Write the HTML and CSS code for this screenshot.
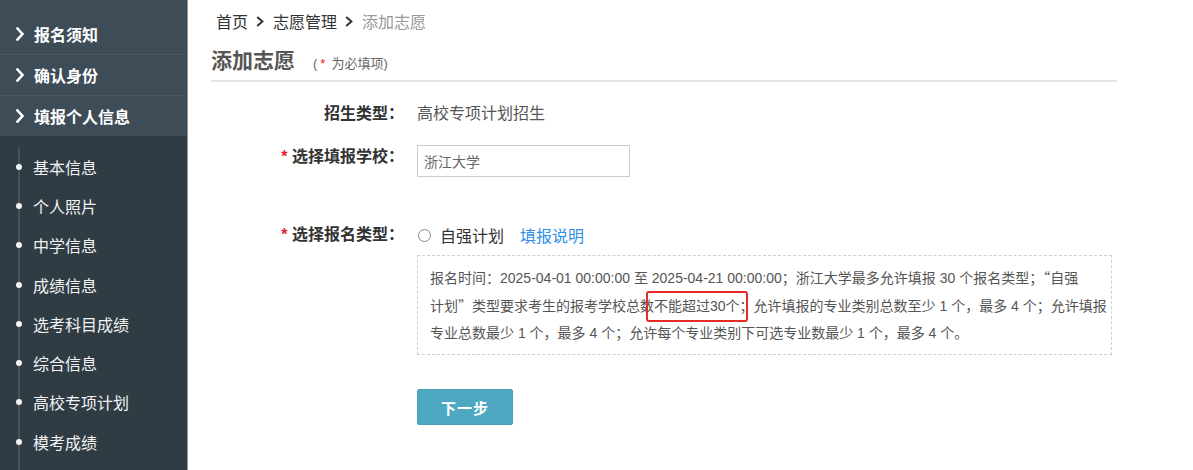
FILE: index.html
```html
<!DOCTYPE html>
<html lang="zh-CN">
<head>
<meta charset="utf-8">
<title>添加志愿</title>
<link rel="stylesheet" href="styles.css">
</head>
<body>
<div class="layout">
  <aside class="sidebar">
    <ul class="menu">
      <li class="menu-item"><svg class="chev" width="8" height="14" viewBox="0 0 8 14"><path d="M1.5 1.5 L6.5 7 L1.5 12.5" fill="none" stroke="#fff" stroke-width="2.6" stroke-linecap="square"/></svg>报名须知</li>
      <li class="menu-item"><svg class="chev" width="8" height="14" viewBox="0 0 8 14"><path d="M1.5 1.5 L6.5 7 L1.5 12.5" fill="none" stroke="#fff" stroke-width="2.6" stroke-linecap="square"/></svg>确认身份</li>
      <li class="menu-item"><svg class="chev" width="8" height="14" viewBox="0 0 8 14"><path d="M1.5 1.5 L6.5 7 L1.5 12.5" fill="none" stroke="#fff" stroke-width="2.6" stroke-linecap="square"/></svg>填报个人信息</li>
    </ul>
    <div class="submenu-wrap">
      <ul class="submenu">
        <li>基本信息</li>
        <li>个人照片</li>
        <li>中学信息</li>
        <li>成绩信息</li>
        <li>选考科目成绩</li>
        <li>综合信息</li>
        <li>高校专项计划</li>
        <li>模考成绩</li>
      </ul>
    </div>
  </aside>
  <main class="main">
    <nav class="breadcrumb">
      <span>首页</span>
      <svg class="bc-sep" width="8" height="11" viewBox="0 0 8 11"><path d="M1.2 1 L6.4 5.5 L1.2 10" fill="none" stroke="#333" stroke-width="2"/></svg>
      <span>志愿管理</span>
      <svg class="bc-sep" width="8" height="11" viewBox="0 0 8 11"><path d="M1.2 1 L6.4 5.5 L1.2 10" fill="none" stroke="#333" stroke-width="2"/></svg>
      <span class="bc-current">添加志愿</span>
    </nav>
    <div class="page-title">
      <h2 class="title">添加志愿</h2>
      <span class="hint">(<span class="req hint-star">*</span>为必填项)</span>
    </div>
    <form class="form">
      <div class="row row-first">
        <div class="label">招生类型：</div>
        <div class="value text-value">高校专项计划招生</div>
      </div>
      <div class="row row-school">
        <div class="label"><span class="req">*</span> 选择填报学校：</div>
        <div class="value"><input class="input" type="text" value="浙江大学"></div>
      </div>
      <div class="row row-type">
        <div class="label"><span class="req">*</span> 选择报名类型：</div>
        <div class="value">
          <div class="radio-line">
            <span class="radio"></span>
            <span class="radio-text">自强计划</span>
            <a class="link">填报说明</a>
          </div>
          <div class="notice">报名时间：2025-04-01 00:00:00 至 2025-04-21 00:00:00；浙江大学最多允许填报 30 个报名类型；<span class="q">“</span>自强<br>计划<span class="q">”</span>类型要求考生的报考学校总数<span class="mark">不能超过30个；</span>允许填报的专业类别总数至少 1 个，最多 4 个；允许填报<br>专业总数最少 1 个，最多 4 个；允许每个专业类别下可选专业数最少 1 个，最多 4 个。</div>
          <button class="btn" type="button">下一步</button>
        </div>
      </div>
    </form>
  </main>
</div>
</body>
</html>
```
FILE: styles.css
```css
* { box-sizing: border-box; }
html, body { margin: 0; padding: 0; }
body {
  font-family: "Liberation Sans", "Noto Sans CJK SC", sans-serif;
  background: #fff;
  color: #333;
  width: 1193px;
  height: 470px;
  overflow: hidden;
}
.layout {
  display: flex;
  height: 470px;
}
.sidebar {
  width: 188px;
  flex: 0 0 188px;
  background: #3d4c56;
  border-right: 1px solid #8e969b;
  display: flex;
  flex-direction: column;
  padding-top: 14px;
}
.menu { list-style: none; margin: 0; padding: 0; }
.menu-item {
  height: 41px;
  border-bottom: 1px solid #47575f;
  display: flex;
  align-items: center;
  padding-left: 16px;
  color: #fff;
  font-size: 16px;
  font-weight: bold;
}
.menu-item:last-child { border-bottom: none; height: 40px; }
.chev { margin-right: 10px; flex: 0 0 auto; }
.submenu-wrap {
  flex: 1;
  background: #2f3c44;
  padding-top: 11px;
  display: flex;
  flex-direction: column;
}
.submenu {
  list-style: none;
  margin: 0 0 0 18px;
  padding: 0;
  border-left: 2px solid #46535b;
  flex: 1;
}
.submenu li {
  position: relative;
  height: 39.3px;
  display: flex;
  align-items: center;
  padding-left: 13px;
  color: #f2f2f2;
  font-size: 16px;
}
.submenu li::before {
  content: "";
  position: absolute;
  left: -4.5px;
  top: 50%;
  width: 6px;
  height: 6px;
  margin-top: -3px;
  border-radius: 50%;
  background: #f4f4f4;
}
.main {
  flex: 1;
  padding: 10px 76px 0 23px;
}
.breadcrumb {
  display: flex;
  align-items: center;
  height: 22px;
  padding-left: 5px;
  font-size: 16px;
  color: #333;
}
.bc-sep { margin: 0 9px 0 8px; }
.bc-current { color: #999; }
.page-title {
  display: flex;
  align-items: center;
  margin-top: 16px;
  height: 34px;
  padding-bottom: 6px;
  border-bottom: 2px solid #e4e4e4;
}
.title {
  margin: 0;
  font-size: 21px;
  font-weight: bold;
  color: #555;
  line-height: 28px;
}
.hint {
  margin-left: 18px;
  margin-top: 2px;
  font-size: 13px;
  color: #666;
}
.hint-star { margin: 0 6px 0 3px; }
.req { color: #e8212a; }
.form { margin: 0; }
.row { display: flex; }
.label {
  width: 193px;
  flex: 0 0 193px;
  text-align: right;
  font-size: 16px;
  font-weight: bold;
  color: #333;
}
.value { margin-left: 13px; flex: 1; }
.row-first { margin-top: 21px; }
.row-first .label, .row-first .value { line-height: 22px; }
.text-value { font-size: 16px; color: #555; }
.row-school { margin-top: 20px; }
.row-school .label { line-height: 24px; }
.input {
  width: 213px;
  height: 32px;
  border: 1px solid #ccc;
  padding: 0 6px;
  font-family: "Liberation Sans", "Noto Sans CJK SC", sans-serif;
  font-size: 14px;
  color: #666;
  outline: none;
}
.row-type { margin-top: 47px; }
.row-type .label { line-height: 22px; }
.radio-line {
  display: flex;
  align-items: center;
  height: 22px;
  font-size: 16px;
}
.radio {
  width: 13px;
  height: 13px;
  border: 1px solid #888;
  border-radius: 50%;
  margin-left: 1px;
}
.radio-text { margin-left: 9px; color: #333; }
.link { margin-left: 16px; color: #2f8fe6; }
.notice {
  margin-top: 9px;
  width: 695px;
  border: 1px dashed #cfcfcf;
  padding: 7.5px 2px 7.5px 12px;
  font-size: 14px;
  line-height: 27px;
  color: #555;
}
.q { font-family: "Noto Sans CJK SC", sans-serif; }
.mark { position: relative; }
.mark::after {
  content: "";
  position: absolute;
  left: -8px;
  right: 6px;
  top: -7px;
  bottom: -8px;
  border: 2px solid #e52b24;
  border-radius: 3px;
}
.btn {
  display: block;
  margin-top: 34px;
  width: 96px;
  height: 36px;
  border: 1px solid #4aa0b8;
  border-radius: 2px;
  background: #4fa8c1;
  color: #fff;
  font-family: "Liberation Sans", "Noto Sans CJK SC", sans-serif;
  font-size: 15px;
  font-weight: bold;
  letter-spacing: 1px;
}
```
